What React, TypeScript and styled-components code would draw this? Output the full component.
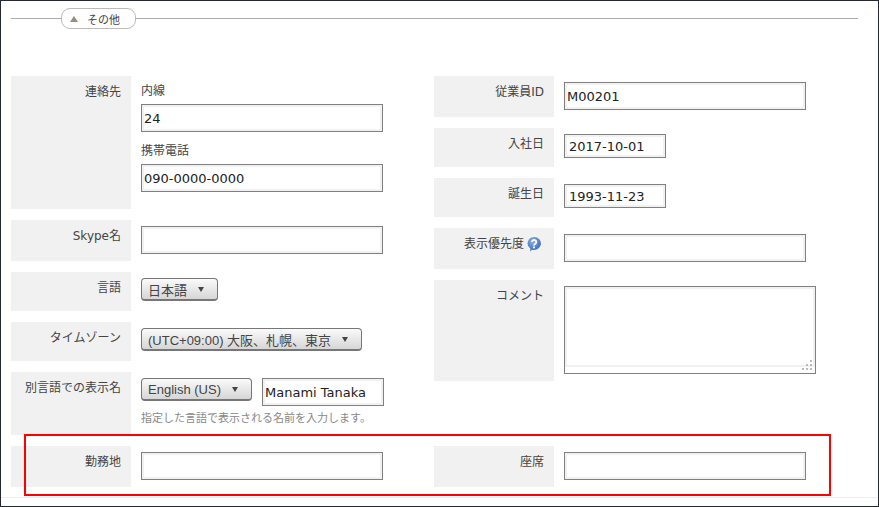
import React from "react";
import styled, { createGlobalStyle } from "styled-components";

const Global = createGlobalStyle`
  html, body { margin: 0; padding: 0; background: #fff; }
  #root { width: 879px; height: 507px; overflow: hidden; }
`;

const FONT = `"DejaVu Sans", "Noto Sans CJK JP", sans-serif`;

const Frame = styled.div`
  position: relative;
  box-sizing: border-box;
  width: 879px;
  height: 507px;
  border: 1px solid #23292e;
  background: #fff;
  font-family: ${FONT};
  font-size: 13px;
  color: #333;
  padding: 7px 20px 0 10px;
  overflow: hidden;
`;

const SectionHeader = styled.div`
  display: flex;
  align-items: center;
  height: 21px;
`;

const Rule = styled.div<{ $w?: number }>`
  height: 1px;
  background: #aaa;
  ${(p) => (p.$w ? `width: ${p.$w}px;` : "flex: 1;")}
`;

const Pill = styled.div`
  box-sizing: border-box;
  display: flex;
  align-items: center;
  width: 75px;
  height: 21px;
  padding-left: 8px;
  gap: 9px;
  border: 1px solid #bbb;
  border-radius: 9px;
  font-size: 11px;
  color: #444;
`;

const Caret = styled.span`
  width: 0;
  height: 0;
  border-left: 4px solid transparent;
  border-right: 4px solid transparent;
  border-bottom: 6px solid #9a8b7e;
`;

const Columns = styled.div`
  display: grid;
  grid-template-columns: 423px 400px;
  margin-top: 47px;
  row-gap: 11px;
`;

const Column = styled.div`
  display: flex;
  flex-direction: column;
  gap: 11px;
`;

const Row = styled.div<{ $h: number }>`
  display: flex;
  height: ${(p) => p.$h}px;
`;

const Label = styled.div`
  box-sizing: border-box;
  flex: none;
  display: flex;
  justify-content: flex-end;
  align-items: flex-start;
  width: 120px;
  padding: 8px 10px 0 0;
  background: #f1f1f1;
  font-size: 12px;
  line-height: 16px;
  color: #444;
`;

const Field = styled.div<{ $pt?: number }>`
  padding: ${(p) => p.$pt ?? 6}px 0 0 10px;
`;

const SubLabel = styled.div`
  font-size: 12px;
  line-height: 16px;
  color: #444;
  margin-bottom: 5px;
`;

const SubGroup = styled.div`
  margin-bottom: 11px;
`;

const Input = styled.input<{ $w?: number; $h?: number }>`
  box-sizing: border-box;
  display: block;
  width: ${(p) => p.$w ?? 242}px;
  height: ${(p) => p.$h ?? 28}px;
  margin: 0;
  padding: 0 2px;
  border: 1px solid #808080;
  border-radius: 0;
  box-shadow: inset 0 0 0 2px #f1f1f1;
  background: #fff;
  font-family: ${FONT};
  font-size: 13px;
  color: #222;
  outline: none;
`;

const DateInput = styled(Input)`
  padding-left: 4px;
`;

const TextAreaBox = styled.div`
  position: relative;
  box-sizing: border-box;
  width: 252px;
  height: 88px;
  border: 1px solid #808080;
  background: #fff;
`;

const TextAreaInner = styled.div`
  height: 76px;
  border: 2px solid #f1f1f1;
`;

const Grip = styled.svg`
  position: absolute;
  right: 2px;
  bottom: 2px;
`;

const Select = styled.div<{ $w: number }>`
  box-sizing: border-box;
  display: flex;
  align-items: center;
  justify-content: space-between;
  width: ${(p) => p.$w}px;
  height: 23px;
  padding: 0 13px 0 6px;
  border: 1px solid #777;
  border-bottom-width: 2px;
  border-radius: 4px;
  background: linear-gradient(#fafafa, #d6d6d6);
  font-family: "Liberation Sans", "Noto Sans CJK JP", sans-serif;
  font-size: 13px;
  color: #444;
`;

const SelectCaret = styled.span`
  width: 0;
  height: 0;
  border-left: 3.5px solid transparent;
  border-right: 3.5px solid transparent;
  border-top: 5px solid #444;
`;

const Inline = styled.div`
  display: flex;
  align-items: flex-start;
  gap: 10px;
`;

const Hint = styled.div`
  margin-top: 5px;
  font-size: 11px;
  line-height: 16px;
  color: #888;
`;

const RedBox = styled.div`
  position: absolute;
  box-sizing: border-box;
  left: 23px;
  top: 433px;
  width: 807px;
  height: 62px;
  border: 2px solid #f00;
`;

const FooterLine = styled.div`
  position: absolute;
  left: 0;
  right: 0;
  top: 496px;
  height: 1px;
  background: #eee;
`;

const HelpIcon = styled.svg`
  flex: none;
  margin: 1px 3px 0 3px;
`;

const Help = () => (
  <HelpIcon width="14" height="15" viewBox="0 0 14 15" aria-hidden="true">
    <defs>
      <radialGradient id="hg" cx="40%" cy="30%" r="75%">
        <stop offset="0" stopColor="#8fb2e6" />
        <stop offset="1" stopColor="#2f62b0" />
      </radialGradient>
    </defs>
    <path d="M7 0a7 6.5 0 1 1-2.2 12.7L3.4 14.8l-.1-3.2A7 6.5 0 0 1 7 0z" fill="url(#hg)" />
    <path d="M4.8 4.9a2.3 2 0 1 1 3.5 1.8C7.4 7.3 7 7.6 7 8.6" fill="none" stroke="#fff" strokeWidth="1.7" />
    <rect x="6.1" y="9.5" width="1.8" height="1.8" fill="#fff" />
  </HelpIcon>
);

export default function App() {
  return (
    <>
      <Global />
      <Frame>
        <SectionHeader>
          <Rule $w={50} />
          <Pill>
            <Caret />
            <span>その他</span>
          </Pill>
          <Rule />
        </SectionHeader>
        <Columns>
          <Column>
            <Row $h={133}>
              <Label>連絡先</Label>
              <Field $pt={7}>
                <SubGroup>
                  <SubLabel>内線</SubLabel>
                  <Input defaultValue="24" />
                </SubGroup>
                <SubGroup>
                  <SubLabel>携帯電話</SubLabel>
                  <Input defaultValue="090-0000-0000" />
                </SubGroup>
              </Field>
            </Row>
            <Row $h={41}>
              <Label>Skype名</Label>
              <Field>
                <Input />
              </Field>
            </Row>
            <Row $h={39}>
              <Label>言語</Label>
              <Field>
                <Select $w={77}>
                  日本語
                  <SelectCaret />
                </Select>
              </Field>
            </Row>
            <Row $h={39}>
              <Label>タイムゾーン</Label>
              <Field>
                <Select $w={221}>
                  (UTC+09:00) 大阪、札幌、東京
                  <SelectCaret />
                </Select>
              </Field>
            </Row>
            <Row $h={63}>
              <Label>別言語での表示名</Label>
              <Field>
                <Inline>
                  <Select $w={111}>
                    English (US)
                    <SelectCaret />
                  </Select>
                  <Input $w={122} defaultValue="Manami Tanaka" />
                </Inline>
                <Hint>指定した言語で表示される名前を入力します。</Hint>
              </Field>
            </Row>
          </Column>
          <Column>
            <Row $h={41}>
              <Label>従業員ID</Label>
              <Field>
                <Input defaultValue="M00201" />
              </Field>
            </Row>
            <Row $h={39}>
              <Label>入社日</Label>
              <Field>
                <DateInput $w={102} $h={24} defaultValue="2017-10-01" />
              </Field>
            </Row>
            <Row $h={39}>
              <Label>誕生日</Label>
              <Field>
                <DateInput $w={102} $h={24} defaultValue="1993-11-23" />
              </Field>
            </Row>
            <Row $h={41}>
              <Label>
                表示優先度
                <Help />
              </Label>
              <Field>
                <Input />
              </Field>
            </Row>
            <Row $h={101}>
              <Label>コメント</Label>
              <Field>
                <TextAreaBox>
                  <TextAreaInner />
                  <Grip width="11" height="11" viewBox="0 0 11 11" aria-hidden="true">
                    <g fill="#bbb">
                      <rect x="8" y="0" width="2" height="2" />
                      <rect x="4" y="4" width="2" height="2" />
                      <rect x="8" y="4" width="2" height="2" />
                      <rect x="0" y="8" width="2" height="2" />
                      <rect x="4" y="8" width="2" height="2" />
                      <rect x="8" y="8" width="2" height="2" />
                    </g>
                  </Grip>
                </TextAreaBox>
              </Field>
            </Row>
          </Column>
          <Row $h={41}>
            <Label>勤務地</Label>
            <Field>
              <Input />
            </Field>
          </Row>
          <Row $h={41}>
            <Label>座席</Label>
            <Field>
              <Input />
            </Field>
          </Row>
        </Columns>
        <FooterLine />
        <RedBox />
      </Frame>
    </>
  );
}
